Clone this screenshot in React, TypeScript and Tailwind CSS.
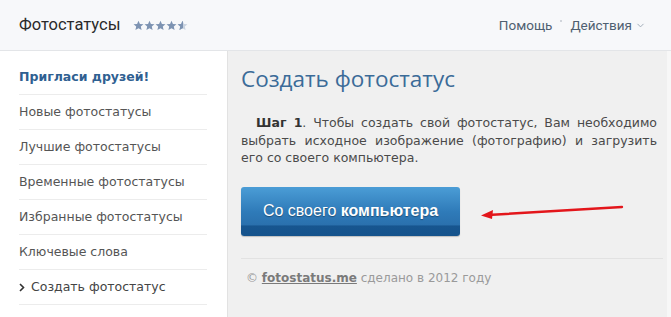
import { ChevronDown } from "lucide-react";

const menu = [
  "Новые фотостатусы",
  "Лучшие фотостатусы",
  "Временные фотостатусы",
  "Избранные фотостатусы",
  "Ключевые слова",
];

function Star({ half = false }: { half?: boolean }) {
  const d = "M5 0.6l1.3 3 3.2 0.3-2.4 2.1 0.7 3.2L5 7.5 2.2 9.2l0.7-3.2L0.5 3.9l3.2-0.3z";
  return (
    <svg width="11" height="11" viewBox="0 0 10 10">
      {half && <path d={d} fill="#c9d3e0" />}
      <path d={d} fill="#7d93b2" style={half ? { clipPath: "inset(0 45% 0 0)" } : undefined} />
    </svg>
  );
}

export default function App() {
  return (
    <div className="flex h-[317px] w-[671px] flex-col overflow-hidden bg-[#f0f0f0]">
      <header className="flex h-[51px] shrink-0 items-center border-b border-[#e3e5e8] bg-[#f7f8fa] pl-[19px] pr-[25px] font-['Roboto',sans-serif]">
        <span className="text-[16.5px] text-[#2a2a2a]">Фотостатусы</span>
        <div className="ml-[13px] mt-[1px] flex">
          <Star />
          <Star />
          <Star />
          <Star />
          <Star half />
        </div>
        <nav className="ml-auto flex items-center text-[13.5px] text-[#4f6071]">
          <span>Помощь</span>
          <span className="mx-[8px] mb-[8px] h-[2px] w-[2px] rounded-full bg-[#c5cad0]" />
          <span>Действия</span>
          <ChevronDown className="ml-[3px] mt-[1px] h-[11px] w-[11px] text-[#9aa6b3]" strokeWidth={2} />
        </nav>
      </header>

      <div className="flex flex-1">
        <aside className="w-[228px] shrink-0 border-r border-[#e2e2e2] bg-white pt-[9px] font-['DejaVu_Sans',sans-serif] text-[12.5px] text-[#555]">
          <ul className="ml-[19px] mr-[20px]">
            <li className="flex h-[35px] items-center border-b border-[#ececec] font-bold text-[#2f6091]">Пригласи друзей!</li>
            {menu.map((item) => (
              <li key={item} className="flex h-[35px] items-center border-b border-[#ececec]">
                {item}
              </li>
            ))}
            <li className="flex h-[35px] items-center border-b border-[#ececec] text-[#444]">
              <svg width="6" height="9" viewBox="0 0 6 9" className="mr-[6px]">
                <polyline points="1,1 4.5,4.5 1,8" fill="none" stroke="#333" strokeWidth="1.6" />
              </svg>
              Создать фотостатус
            </li>
          </ul>
        </aside>

        <main className="flex-1 border-r-[4px] border-[#f7f7f7] pl-[13px] pr-[4px] pt-[14px]">
          <h1 className="font-['Open_Sans',sans-serif] text-[22.5px] leading-[28px] text-[#3b6b98]">Создать фотостатус</h1>
          <p className="mt-[21px] pr-[6px] indent-[15px] text-justify font-['DejaVu_Sans',sans-serif] text-[12.5px] leading-[17.5px] text-[#4a4a4a]">
            <b className="text-[#333]">Шаг 1</b>. Чтобы создать свой фотостатус, Вам необходимо выбрать исходное изображение (фотографию) и загрузить его со своего компьютера.
          </p>
          <div className="mt-[20px] flex items-center">
            <button className="h-[49px] w-[219px] rounded-[3px] bg-[linear-gradient(#4b9dd6,#2f7bb9_50%,#2a70ad_78%,#17558f_79%,#15538c)] font-['Liberation_Sans',sans-serif] text-[16px] text-white shadow-[0_1px_1px_rgba(0,0,0,0.2)] [text-shadow:0_1px_1px_rgba(0,0,0,0.35)]">
              Со своего <b>компьютера</b>
            </button>
            <svg width="146" height="16" viewBox="0 0 146 16" className="ml-[20px] mt-[1px]">
              <line x1="8" y1="11" x2="142" y2="3" stroke="#e3161b" strokeWidth="2.4" strokeLinecap="round" />
              <polygon points="1,11.5 13,6 12,15" fill="#e3161b" />
            </svg>
          </div>
          <div className="mt-[22px] border-t border-[#e2e2e2] pl-[5px] pt-[10px] font-['DejaVu_Sans',sans-serif] text-[12px] text-[#9a9a9a]">
            © <a className="font-bold text-[#7a7a7a] underline">fotostatus.me</a> сделано в 2012 году
          </div>
        </main>
      </div>
    </div>
  );
}
